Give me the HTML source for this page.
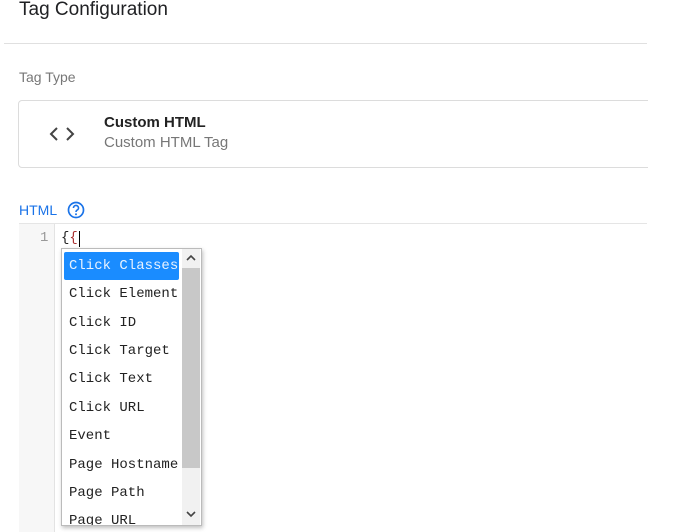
<!DOCTYPE html>
<html><head><style>
body{margin:0;width:677px;height:532px;background:#fff;position:relative;overflow:hidden;font-family:"Liberation Sans",sans-serif}
.a{position:absolute}
.mono{font-family:"Liberation Mono",monospace;font-size:14px;color:#222}
</style></head><body>
<div class="a" style="left:19px;top:-1px;font-size:19px;color:#202124">Tag Configuration</div>
<div class="a" style="left:4px;top:43px;width:643px;height:1px;background:#e0e0e0"></div>
<div class="a" style="left:19px;top:69px;font-size:14px;color:#777">Tag Type</div>
<div class="a" style="left:18px;top:100px;width:640px;height:66px;border:1px solid #dcdcdc;border-radius:4px"></div>
<div class="a" style="left:648px;top:90px;width:29px;height:90px;background:#fff"></div>
<svg class="a" style="left:49px;top:125px" width="26" height="18" viewBox="0 0 26 18"><path d="M8 3 L2 9 L8 15 M18 3 L24 9 L18 15" stroke="#444" stroke-width="2" fill="none"/></svg>
<div class="a" style="left:104px;top:114px;font-size:15px;font-weight:bold;color:#222">Custom HTML</div>
<div class="a" style="left:104px;top:134px;font-size:15px;color:#777">Custom HTML Tag</div>
<div class="a" style="left:19px;top:202px;font-size:14px;color:#1a73e8">HTML</div>
<svg class="a" style="left:67px;top:201px" width="18" height="18" viewBox="0 0 18 18"><circle cx="9" cy="9" r="7.5" stroke="#1a73e8" stroke-width="1.7" fill="none"/><path d="M6.5 7 A2.5 2.5 0 1 1 9.8 9.3 Q9 9.8 9 11" stroke="#1a73e8" stroke-width="1.6" fill="none"/><circle cx="9" cy="13.3" r="1" fill="#1a73e8"/></svg>
<div class="a" style="left:19px;top:223px;width:628px;height:1px;background:#e5e5e5"></div>
<div class="a" style="left:19px;top:224px;width:35px;height:308px;background:#f7f7f7;border-right:1px solid #e3e3e3"></div>
<div class="a mono" style="left:40px;top:230px;color:#999">1</div>
<div class="a mono" style="left:61px;top:230px">{<span style="color:#a33">{</span></div>
<div class="a" style="left:79px;top:231px;width:1px;height:16px;background:#000"></div>
<div class="a" style="left:61px;top:248px;width:139px;height:276px;background:#fff;border:1px solid #bbb;box-shadow:1px 2px 4px rgba(0,0,0,.25);overflow:hidden">
<div class="a" style="left:2px;top:3px;width:115px;height:28px;background:#1a8cff;border-radius:2px"></div>
<div class="a" style="left:120px;top:0;width:18px;height:276px;background:#f1f1f1"></div>
<div class="a" style="left:120px;top:19px;width:18px;height:200px;background:#c8c8c8"></div>
<svg class="a" style="left:123px;top:5px" width="12" height="8"><path d="M2 6 L6 2 L10 6" stroke="#444" stroke-width="1.6" fill="none"/></svg>
<svg class="a" style="left:123px;top:261px" width="12" height="8"><path d="M2 2 L6 6 L10 2" stroke="#444" stroke-width="1.6" fill="none"/></svg>
<div class="a mono" style="left:7px;top:9px;color:#e8f2ff;width:110px;overflow:hidden;white-space:nowrap">Click Classes</div>
<div class="a mono" style="left:7px;top:37px">Click Element</div>
<div class="a mono" style="left:7px;top:66px">Click ID</div>
<div class="a mono" style="left:7px;top:94px">Click Target</div>
<div class="a mono" style="left:7px;top:122px">Click Text</div>
<div class="a mono" style="left:7px;top:151px">Click URL</div>
<div class="a mono" style="left:7px;top:179px">Event</div>
<div class="a mono" style="left:7px;top:208px">Page Hostname</div>
<div class="a mono" style="left:7px;top:236px">Page Path</div>
<div class="a mono" style="left:7px;top:264px">Page URL</div>
</div>
</body></html>
